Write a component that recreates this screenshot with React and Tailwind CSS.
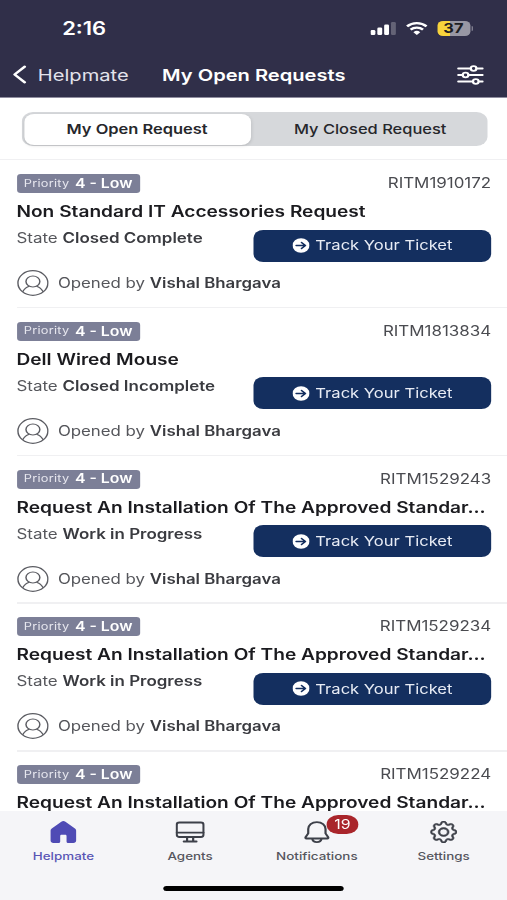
import { BsGear } from "react-icons/bs";

const requests = [
  {
    id: "RITM1910172",
    title: "Non Standard IT Accessories Request",
    state: "Closed Complete",
  },
  {
    id: "RITM1813834",
    title: "Dell Wired Mouse",
    state: "Closed Incomplete",
  },
  {
    id: "RITM1529243",
    title: "Request An Installation Of The Approved Standar...",
    state: "Work in Progress",
  },
  {
    id: "RITM1529234",
    title: "Request An Installation Of The Approved Standar...",
    state: "Work in Progress",
  },
  {
    id: "RITM1529224",
    title: "Request An Installation Of The Approved Standar...",
    state: "Work in Progress",
  },
];

const SignalIcon = () => (
  <svg width="21" height="13" viewBox="0 0 21 13" fill="#fff">
    <rect x="0" y="8" width="4" height="5" rx="1.2" />
    <rect x="5.6" y="5.5" width="4" height="7.5" rx="1.2" />
    <rect x="11.2" y="2.5" width="4" height="10.5" rx="1.2" />
    <rect x="16.8" y="0" width="4" height="13" rx="1.2" opacity="0.25" />
  </svg>
);

const WifiIcon = () => (
  <svg width="18" height="13" viewBox="0 0 18 13" fill="none" stroke="#fff">
    <path d="M1 4.4a11.6 11.6 0 0 1 16 0" strokeWidth="2.3" />
    <path d="M3.9 7.6a7.4 7.4 0 0 1 10.2 0" strokeWidth="2.2" />
    <path d="M9 13 6.2 10.2a4 4 0 0 1 5.6 0Z" fill="#fff" stroke="none" />
  </svg>
);

const FilterIcon = () => (
  <svg width="22" height="20" viewBox="0 0 22 20" fill="none" stroke="#fff" strokeWidth="1.8" strokeLinecap="round">
    <path d="M1 3.5h10.2M16 3.5h5M1 10h3.6M9.4 10H21M1 16.5h12M17.9 16.5H21" />
    <circle cx="13.6" cy="3.5" r="2.3" />
    <circle cx="7" cy="10" r="2.3" />
    <circle cx="15.4" cy="16.5" r="2.3" />
  </svg>
);

const ArrowIcon = () => (
  <svg width="14" height="15" viewBox="0 0 14 15" fill="none">
    <ellipse cx="7" cy="7.5" rx="7" ry="7.3" fill="#fff" />
    <path d="M3 7.5h7.3M7.4 4.5l3.2 3-3.2 3" stroke="#142f5f" strokeWidth="1.4" strokeLinecap="round" strokeLinejoin="round" />
  </svg>
);

const AvatarIcon = () => (
  <svg width="26" height="26" viewBox="0 0 26 26" fill="none" stroke="#5c5d63" strokeWidth="1.2">
    <circle cx="13" cy="13" r="12.3" />
    <ellipse cx="13" cy="11.5" rx="5.7" ry="5.5" />
    <path d="M4.6 21.8c1.4-3 3.3-4.9 5.5-5.6M21.4 21.8c-1.4-3-3.3-4.9-5.5-5.6" />
  </svg>
);

const HomeIcon = () => (
  <svg width="22" height="22" viewBox="0 0 22 22" fill="#4f4bb5">
    <path d="M9.3.8a2.6 2.6 0 0 1 3.4 0l7.8 6.8c.6.5 1 1.3 1 2.1v9.9c0 1.3-1 2.4-2.3 2.4h-4c-.9 0-1.600-.7-1.600-1.600v-5.500c0-.6-.5-1.100-1.100-1.100H9.500c-.6 0-1.100.5-1.100 1.100v5.500c0 .9-.7 1.600-1.600 1.600H2.800C1.500 22 .5 20.900.5 19.600V9.700c0-.8.4-1.600 1-2.100Z" />
  </svg>
);

const MonitorIcon = () => (
  <svg width="24" height="22" viewBox="0 0 24 22" fill="none" stroke="#3d4049" strokeWidth="1.8">
    <rect x="1" y="1.5" width="22" height="14.5" rx="2.2" />
    <path d="M1 11.6h22M9.5 16v4M14.5 16v4M6.8 20.5h10.400" strokeLinecap="round" />
  </svg>
);

const BellIcon = () => (
  <svg width="22" height="22" viewBox="0 0 22 22" fill="none" stroke="#3d4049" strokeWidth="1.8" strokeLinejoin="round">
    <path d="M11 1.1c-4.2 0-7.100 3-7.100 7v4.300L1.700 16.300c-.3.6 0 1.200.7 1.200h17.200c.7 0 1-.6.7-1.200l-2.200-3.900V8.100c0-4-2.900-7-7.100-7Z" />
    <path d="M7.3 17.8c.2 2 1.700 3.300 3.700 3.300s3.500-1.300 3.700-3.300" />
  </svg>
);

const tabs = [
  { label: "Helpmate", icon: <HomeIcon />, active: true },
  { label: "Agents", icon: <MonitorIcon /> },
  { label: "Notifications", icon: <BellIcon />, count: 19 },
  {
    label: "Settings",
    icon: <BsGear size={22} color="#3d4049" strokeWidth={0.4} />,
  },
];

const RequestCard = ({ request }) => (
  <div className="h-[147.75px] shrink-0 pl-[13.5px]">
    <div className="flex h-full flex-col pr-[13px] pt-[14px]">
      <div className="flex h-[19px] items-center justify-between">
        <div className="flex h-[19px] w-[101px] items-center gap-[4.5px] whitespace-nowrap rounded-[3px] bg-[#7c7f97] pl-[6px] text-white">
          <span className="text-[10.5px] tracking-[0.2px] text-[#e6e6ee]">
            Priority
          </span>
          <span className="text-[13px] font-semibold">4 - Low</span>
        </div>
        <span className="text-[13.9px] text-[#4a4b50]">{request.id}</span>
      </div>
      <h2 className="mt-[9px] whitespace-nowrap text-[15.7px] font-semibold leading-[20px] text-[#1b1b1f]">
        {request.title}
      </h2>
      <div className="flex justify-between">
        <p className="mt-[7px] whitespace-nowrap text-[13.9px] leading-[18px] text-[#55565b]">
          State{" "}
          <span className="font-semibold text-[#3a3b40]">{request.state}</span>
        </p>
        <button className="mt-[7.5px] flex h-[32px] w-[195px] shrink-0 items-center justify-center gap-[5px] rounded-[8px] bg-[#142f5f] text-[13.6px] text-[#e8ecf5]">
          <ArrowIcon />
          Track Your Ticket
        </button>
      </div>
      <div className="mt-[8.5px] flex items-center gap-[8px] whitespace-nowrap text-[13.8px] text-[#55565b]">
        <AvatarIcon />
        <p className="pt-px">
          Opened by{" "}
          <span className="font-semibold text-[#3a3b40]">Vishal Bhargava</span>
        </p>
      </div>
    </div>
    <div className="-mt-px h-[1.5px] bg-[#f0f0f2]" />
  </div>
);

const App = () => {
  return (
    <div className="h-[900px] w-[507px] overflow-hidden bg-white">
      {/* 416px wide phone layout, widened to fill the frame */}
      <div className="flex h-[900px] w-[416px] origin-left scale-x-[1.21875] flex-col font-['Inter',sans-serif]">
        <header className="h-[98px] shrink-0 border-b border-[#8f8d9f] bg-[#302f49] text-white">
          <div className="flex h-[57px] items-center justify-between pl-[51px] pr-[28px]">
            <span className="text-[18px] font-semibold">2:16</span>
            <div className="flex items-center gap-[8px]">
              <SignalIcon />
              <WifiIcon />
              <div className="flex items-center gap-px">
                <div className="flex h-[15px] w-[27px] items-center justify-center rounded-[4.5px] bg-[linear-gradient(to_right,#f8d43c_37%,#9897a4_37%)] text-[13.5px] font-bold leading-none text-[#1d1d22]">
                  37
                </div>
                <div className="h-[5px] w-[1.5px] rounded-r-full bg-[#8b8a99]" />
              </div>
            </div>
          </div>
          <div className="flex h-[35px] items-center whitespace-nowrap pl-[10px] pr-[19px]">
            <svg width="12" height="19" viewBox="0 0 12 19" fill="none" stroke="#fff" strokeWidth="2.3" strokeLinecap="round" strokeLinejoin="round">
              <path d="M10.3 1.7 2 9.5l8.3 7.8" />
            </svg>
            <span className="ml-[9px] w-[102px] pt-px text-[16.5px] text-[#e3e3ec]">
              Helpmate
            </span>
            <h1 className="flex-1 pt-px text-[16.5px] font-semibold">
              My Open Requests
            </h1>
            <FilterIcon />
          </div>
        </header>

        <div className="h-[62px] shrink-0 border-b-[1.5px] border-[#f0f0f2] pl-[18px] pr-[16.5px] pt-[14px]">
          <div className="flex h-[34px] rounded-[9px] bg-[#d6d8db] p-[1.5px] text-[13.5px] text-[#26272b]">
            <button className="w-[186px] rounded-[8px] bg-white font-semibold shadow-sm">
              My Open Request
            </button>
            <button className="flex-1 pl-[4px] font-medium">
              My Closed Request
            </button>
          </div>
        </div>

        <main className="flex min-h-0 flex-1 flex-col overflow-hidden">
          {requests.map((r) => (
            <RequestCard key={r.id} request={r} />
          ))}
        </main>

        <nav className="flex h-[89px] shrink-0 flex-col items-center bg-[#f5f5f8]">
          <div className="flex h-[75px] w-full pt-[10px]">
            {tabs.map((tab) => (
              <div key={tab.label} className="flex flex-1 flex-col items-center">
                <div className="relative h-[22px]">
                  {tab.icon}
                  {tab.count && (
                    <span className="absolute -top-[6px] left-[19px] flex h-[19px] w-[26px] items-center justify-center rounded-full bg-[#a9252b] text-[13px] text-white">
                      {tab.count}
                    </span>
                  )}
                </div>
                <span
                  className={`mt-[5px] text-[11px] font-medium leading-[16px] ${
                    tab.active ? "text-[#5a55b5]" : "text-[#55565e]"
                  }`}
                >
                  {tab.label}
                </span>
              </div>
            ))}
          </div>
          <div className="h-[5px] w-[148px] rounded-full bg-black" />
        </nav>
      </div>
    </div>
  );
};

export default App;
